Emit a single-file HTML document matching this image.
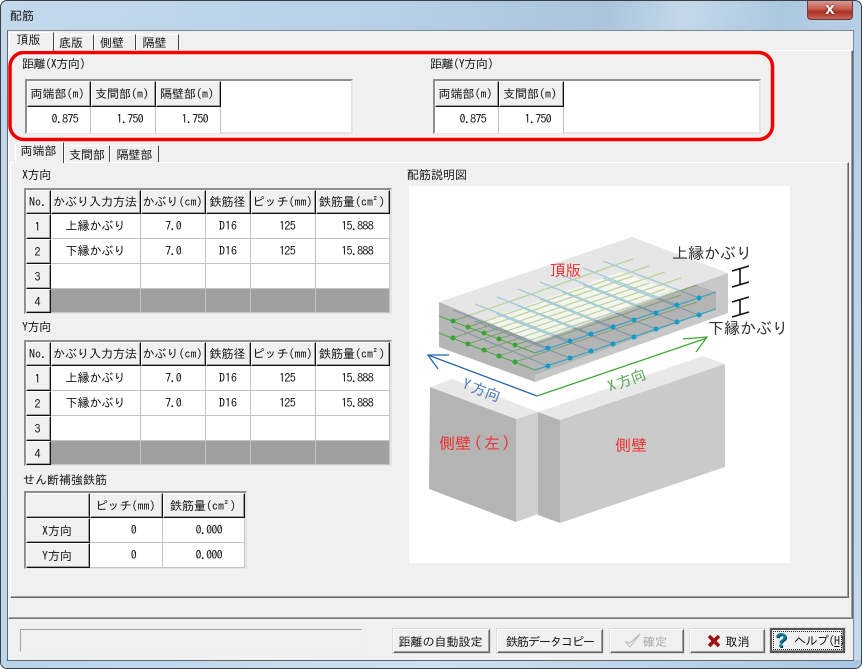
<!DOCTYPE html>
<html lang="ja"><head><meta charset="utf-8"><title>配筋</title>
<style>
html,body{margin:0;padding:0;background:#fff}
#w{position:relative;width:862px;height:669px;overflow:hidden;font:12px/14px "IPAGothic","Noto Sans CJK JP",sans-serif;color:#111;background:#fff}
#w div{position:absolute;box-sizing:border-box;white-space:nowrap}
.h{background:#f0f0f0;border:1px solid;border-color:#fff #111 #111 #fff;box-shadow:inset -1px -1px 0 #a0a0a0;text-align:center;padding-top:5px;padding-right:2px}
.c{background:#fff;border-right:1px solid #c4c4c4;border-bottom:1px solid #c4c4c4;text-align:right;padding-top:5px;letter-spacing:-.7px}
.m{text-align:center;letter-spacing:0}
.d{background:#a0a0a0;border-right:1px solid #c4c4c4;border-bottom:1px solid #c4c4c4}
.g{background:#fff;border:2px solid;border-color:#8f8f8f #e4e4e4 #e4e4e4 #8f8f8f}
.t{background:#f0f0f0;border:1px solid;border-color:#fff #444 transparent #fff;border-bottom:0;text-align:center;padding-top:3px}
.b{background:#f0f0f0;border:1px solid;border-color:#fff #666 #666 #fff;box-shadow:inset -1px -1px 0 #a0a0a0,0 0 0 1px #ddd;text-align:center;padding-top:5px}
.l{letter-spacing:-.4px}
</style></head><body>
<div id="w">
<div style="left:0;top:0;width:862px;height:669px;border:1px solid #3a3f45;border-radius:7px;background:linear-gradient(100deg,#c4d9ec 0%,#b5d0e8 40%,#a9c4dc 62%,#c3d8ea 70%,#acc8e0 80%,#c5daee 100%)"></div>
<div style="left:1px;top:660px;width:860px;height:8px;background:linear-gradient(90deg,#b8d4ea,#cfe1f0 50%,#a9c8e2);border-radius:0 0 6px 6px"></div>
<div style="left:10px;top:9px;font-size:12px;color:#111">配筋</div>
<div style="left:807px;top:1px;width:46px;height:19px;border:1px solid #6d3a3a;border-top:0;border-radius:0 0 4px 4px;background:linear-gradient(#d89a90,#c45a4d 45%,#a92e22 60%,#c9675a);color:#fff;text-align:center;font:bold 17px/15px 'Liberation Sans',sans-serif;text-shadow:0 0 2px #511">x</div>

<div style="left:7px;top:30px;width:847px;height:631px;background:#f0f0f0;border:1px solid;border-color:#7d8a96 #7d8a96 #5f6972 #5f6972"></div>
<!-- outer page -->
<div style="left:8px;top:50px;width:845px;height:569px;border:1px solid;border-color:#fff #666 #666 #fff;box-shadow:inset -1px -1px 0 #a0a0a0"></div>
<div class="t" style="left:9px;top:32px;width:45px;height:19px;z-index:2;padding-top:0;padding-right:6px">頂版</div>
<div class="t" style="left:54px;top:34px;width:40px;height:16px;padding-top:1px;padding-right:6px">底版</div>
<div class="t" style="left:94px;top:34px;width:42px;height:16px;padding-top:1px;padding-right:6px">側壁</div>
<div class="t" style="left:136px;top:34px;width:43px;height:16px;padding-top:1px;padding-right:6px">隔壁</div>

<div class="l" style="left:22px;top:57px">距離(X方向)</div>
<div class="l" style="left:430px;top:57px">距離(Y方向)</div>

<div class="g" style="left:25px;top:79px;width:328px;height:55px"></div>
<div class="h" style="left:27px;top:81px;width:64px;height:26px;padding-right:3px">両端部(m)</div>
<div class="h" style="left:91px;top:81px;width:65px;height:26px;padding-right:3px">支間部(m)</div>
<div class="h" style="left:156px;top:81px;width:65px;height:26px;padding-right:3px">隔壁部(m)</div>
<div class="c" style="left:27px;top:107px;width:64px;height:26px;padding-right:12px;border-bottom:0">0.875</div>
<div class="c" style="left:91px;top:107px;width:65px;height:26px;padding-right:12px;border-bottom:0">1.750</div>
<div class="c" style="left:156px;top:107px;width:65px;height:26px;padding-right:12px;border-bottom:0">1.750</div>

<div class="g" style="left:433px;top:79px;width:328px;height:55px"></div>
<div class="h" style="left:435px;top:81px;width:64px;height:26px;padding-right:3px">両端部(m)</div>
<div class="h" style="left:499px;top:81px;width:65px;height:26px;padding-right:3px">支間部(m)</div>
<div class="c" style="left:435px;top:107px;width:64px;height:26px;padding-right:12px;border-bottom:0">0.875</div>
<div class="c" style="left:499px;top:107px;width:65px;height:26px;padding-right:12px;border-bottom:0">1.750</div>

<!-- inner page -->
<div style="left:10px;top:162px;width:839px;height:436px;border:1px solid;border-color:#fff #666 #666 #fff;box-shadow:inset -1px -1px 0 #a0a0a0"></div>
<div class="t" style="left:15px;top:142px;width:49px;height:21px;z-index:2;padding-top:1px;padding-right:2px">両端部</div>
<div class="t" style="left:64px;top:145px;width:46px;height:17px;padding-top:2px">支間部</div>
<div class="t" style="left:110px;top:145px;width:49px;height:17px;padding-top:2px">隔壁部</div>

<div class="l" style="left:22px;top:168px">X方向</div>
<div class="g" style="left:24px;top:188px;width:368px;height:126px"></div>
<div class="h" style="left:26px;top:190px;width:25px;height:24px;padding-top:4px;padding-right:1px">No.</div>
<div class="h" style="left:51px;top:190px;width:90px;height:24px;padding-top:4px">かぶり入力方法</div>
<div class="h" style="left:141px;top:190px;width:65px;height:24px;padding-top:4px">かぶり(cm)</div>
<div class="h" style="left:206px;top:190px;width:45px;height:24px;padding-top:4px">鉄筋径</div>
<div class="h" style="left:251px;top:190px;width:65px;height:24px;padding-top:4px">ピッチ(mm)</div>
<div class="h" style="left:316px;top:190px;width:74px;height:24px;padding-top:4px">鉄筋量(cm²)</div>
<div class="h" style="left:26px;top:214px;width:25px;height:25px">1</div>
<div class="c m" style="left:51px;top:214px;width:90px;height:25px">上縁かぶり</div>
<div class="c" style="left:141px;top:214px;width:65px;height:25px;padding-right:24px">7.0</div>
<div class="c m" style="left:206px;top:214px;width:45px;height:25px">D16</div>
<div class="c" style="left:251px;top:214px;width:65px;height:25px;padding-right:20px">125</div>
<div class="c" style="left:316px;top:214px;width:74px;height:25px;padding-right:16px">15.888</div>
<div class="h" style="left:26px;top:239px;width:25px;height:25px">2</div>
<div class="c m" style="left:51px;top:239px;width:90px;height:25px">下縁かぶり</div>
<div class="c" style="left:141px;top:239px;width:65px;height:25px;padding-right:24px">7.0</div>
<div class="c m" style="left:206px;top:239px;width:45px;height:25px">D16</div>
<div class="c" style="left:251px;top:239px;width:65px;height:25px;padding-right:20px">125</div>
<div class="c" style="left:316px;top:239px;width:74px;height:25px;padding-right:16px">15.888</div>
<div class="h" style="left:26px;top:264px;width:25px;height:25px">3</div>
<div class="c" style="left:51px;top:264px;width:90px;height:25px"></div>
<div class="c" style="left:141px;top:264px;width:65px;height:25px"></div>
<div class="c" style="left:206px;top:264px;width:45px;height:25px"></div>
<div class="c" style="left:251px;top:264px;width:65px;height:25px"></div>
<div class="c" style="left:316px;top:264px;width:74px;height:25px"></div>
<div class="h" style="left:26px;top:289px;width:25px;height:24px">4</div>
<div class="d" style="left:51px;top:289px;width:90px;height:24px"></div>
<div class="d" style="left:141px;top:289px;width:65px;height:24px"></div>
<div class="d" style="left:206px;top:289px;width:45px;height:24px"></div>
<div class="d" style="left:251px;top:289px;width:65px;height:24px"></div>
<div class="d" style="left:316px;top:289px;width:74px;height:24px"></div>

<div class="l" style="left:22px;top:320px">Y方向</div>
<div class="g" style="left:24px;top:340px;width:368px;height:126px"></div>
<div class="h" style="left:26px;top:342px;width:25px;height:24px;padding-top:4px;padding-right:1px">No.</div>
<div class="h" style="left:51px;top:342px;width:90px;height:24px;padding-top:4px">かぶり入力方法</div>
<div class="h" style="left:141px;top:342px;width:65px;height:24px;padding-top:4px">かぶり(cm)</div>
<div class="h" style="left:206px;top:342px;width:45px;height:24px;padding-top:4px">鉄筋径</div>
<div class="h" style="left:251px;top:342px;width:65px;height:24px;padding-top:4px">ピッチ(mm)</div>
<div class="h" style="left:316px;top:342px;width:74px;height:24px;padding-top:4px">鉄筋量(cm²)</div>
<div class="h" style="left:26px;top:366px;width:25px;height:25px">1</div>
<div class="c m" style="left:51px;top:366px;width:90px;height:25px">上縁かぶり</div>
<div class="c" style="left:141px;top:366px;width:65px;height:25px;padding-right:24px">7.0</div>
<div class="c m" style="left:206px;top:366px;width:45px;height:25px">D16</div>
<div class="c" style="left:251px;top:366px;width:65px;height:25px;padding-right:20px">125</div>
<div class="c" style="left:316px;top:366px;width:74px;height:25px;padding-right:16px">15.888</div>
<div class="h" style="left:26px;top:391px;width:25px;height:25px">2</div>
<div class="c m" style="left:51px;top:391px;width:90px;height:25px">下縁かぶり</div>
<div class="c" style="left:141px;top:391px;width:65px;height:25px;padding-right:24px">7.0</div>
<div class="c m" style="left:206px;top:391px;width:45px;height:25px">D16</div>
<div class="c" style="left:251px;top:391px;width:65px;height:25px;padding-right:20px">125</div>
<div class="c" style="left:316px;top:391px;width:74px;height:25px;padding-right:16px">15.888</div>
<div class="h" style="left:26px;top:416px;width:25px;height:25px">3</div>
<div class="c" style="left:51px;top:416px;width:90px;height:25px"></div>
<div class="c" style="left:141px;top:416px;width:65px;height:25px"></div>
<div class="c" style="left:206px;top:416px;width:45px;height:25px"></div>
<div class="c" style="left:251px;top:416px;width:65px;height:25px"></div>
<div class="c" style="left:316px;top:416px;width:74px;height:25px"></div>
<div class="h" style="left:26px;top:441px;width:25px;height:24px">4</div>
<div class="d" style="left:51px;top:441px;width:90px;height:24px"></div>
<div class="d" style="left:141px;top:441px;width:65px;height:24px"></div>
<div class="d" style="left:206px;top:441px;width:45px;height:24px"></div>
<div class="d" style="left:251px;top:441px;width:65px;height:24px"></div>
<div class="d" style="left:316px;top:441px;width:74px;height:24px"></div>

<div style="left:23px;top:473px">せん断補強鉄筋</div>
<div class="g" style="left:24px;top:491px;width:223px;height:78px"></div>
<div class="h" style="left:26px;top:493px;width:64px;height:25px"></div>
<div class="h" style="left:90px;top:493px;width:73px;height:25px">ピッチ(mm)</div>
<div class="h" style="left:163px;top:493px;width:82px;height:25px">鉄筋量(cm²)</div>
<div class="h" style="left:26px;top:518px;width:64px;height:25px">X方向</div>
<div class="c" style="left:90px;top:518px;width:73px;height:25px;padding-right:26px">0</div>
<div class="c" style="left:163px;top:518px;width:82px;height:25px;padding-right:22px">0.000</div>
<div class="h" style="left:26px;top:543px;width:64px;height:25px">Y方向</div>
<div class="c" style="left:90px;top:543px;width:73px;height:25px;padding-right:26px">0</div>
<div class="c" style="left:163px;top:543px;width:82px;height:25px;padding-right:22px">0.000</div>

<div style="left:407px;top:168px">配筋説明図</div>
<svg style="position:absolute;left:409px;top:186px" width="381" height="377" viewBox="409 186 381 377">
<defs>
<clipPath id="top"><polygon points="439,302 632,237 728,273 535,342"/></clipPath>
<clipPath id="side"><polygon points="439,302 535,342 728,273 728,313 535,382 439,347"/></clipPath>
</defs>
<rect x="409" y="186" width="381" height="377" fill="#fff"/>
<!-- walls -->
<polygon points="430,387 516,419 516,522 429,489" fill="#b4b4b4"/>
<polygon points="430,387 452,379 538,412 516,419" fill="#e8e8e8"/>
<polygon points="516,419 538,412 538,514 516,522" fill="#cfcfcf"/>
<polygon points="538,412 560,420 560,523 538,515" fill="#b4b4b4"/>
<polygon points="538,412 703,356 725,364 560,420" fill="#e8e8e8"/>
<polygon points="560,420 725,364 725,467 560,523" fill="#cacaca"/>
<!-- slab -->
<polygon points="439,302 632,237 728,273 535,342" fill="#e6e6e6"/>
<polygon points="480,322 620,272 672,290 535,340" fill="#f4f5ef"/>
<polygon points="439,302 535,342 535,382 439,347" fill="#b6b6b6"/>
<polygon points="535,342 728,273 728,313 535,382" fill="#c8c8c8"/>
<polygon points="535,342 697,285 716,292 716,309 535,375" fill="#b4b4b4"/>
<!-- green layers -->
<g clip-path="url(#top)" stroke="#b9d39a" stroke-width="1.2" fill="none">
<path d="M453,321L633,259M468,327L649,266M484,333L665,272M499,339L681,278M515,345L697,285"/>
<path d="M453,338L633,276M468,344L649,283M484,350L665,289M499,356L681,295M515,362L697,302"/>
</g>
<g clip-path="url(#side)" stroke="#80a070" stroke-width="1" fill="none">
<path d="M453,321L633,259M468,327L649,266M484,333L665,272M499,339L681,278M515,345L697,285"/>
<path d="M453,338L633,276M468,344L649,283M484,350L665,289M499,356L681,295M515,362L697,302"/>
</g>
<!-- blue layers -->
<g clip-path="url(#top)" stroke="#a5cbd6" stroke-width="1.4" fill="none">
<path d="M453,310L548,348M475,304L570,341M497,297L591,334M518,289L613,327M540,282L634,320M562,275L656,313M583,268L677,305M603,261L699,298"/>
<path d="M453,327L548,366M475,321L570,358M497,314L591,351M518,306L613,344M540,299L634,337M562,292L656,329M583,285L677,322M603,278L699,315"/>
</g>
<g clip-path="url(#side)" stroke="#7f97a3" stroke-width="1.1" fill="none">
<path d="M453,310L548,348M475,304L570,341M497,297L591,334M518,289L613,327M540,282L634,320M562,275L656,313M583,268L677,305M603,261L699,298"/>
<path d="M453,327L548,366M475,321L570,358M497,314L591,351M518,306L613,344M540,299L634,337M562,292L656,329M583,285L677,322M603,278L699,315"/>
</g>
<!-- green rebars on left -->
<g stroke="#4fa548" stroke-width="1" fill="none"><path d="M439,316L535,353M439,333L535,370"/></g>
<!-- blue rebars on right -->
<g stroke="#31a0c4" stroke-width="1" fill="none"><path d="M535,353L716,292M535,370L716,309"/></g>
<g fill="#36a62e">
<circle cx="453" cy="321" r="2.5"/><circle cx="468" cy="327" r="2.5"/><circle cx="484" cy="333" r="2.5"/><circle cx="499" cy="339" r="2.5"/><circle cx="515" cy="345" r="2.5"/>
<circle cx="453" cy="338" r="2.5"/><circle cx="468" cy="344" r="2.5"/><circle cx="484" cy="350" r="2.5"/><circle cx="499" cy="356" r="2.5"/><circle cx="515" cy="362" r="2.5"/>
</g>
<g fill="#0f9ccb">
<circle cx="548" cy="348" r="2.5"/><circle cx="570" cy="341" r="2.5"/><circle cx="591" cy="334" r="2.5"/><circle cx="613" cy="327" r="2.5"/><circle cx="634" cy="320" r="2.5"/><circle cx="656" cy="313" r="2.5"/><circle cx="677" cy="305" r="2.5"/><circle cx="699" cy="298" r="2.5"/>
<circle cx="548" cy="366" r="2.5"/><circle cx="570" cy="358" r="2.5"/><circle cx="591" cy="351" r="2.5"/><circle cx="613" cy="344" r="2.5"/><circle cx="634" cy="337" r="2.5"/><circle cx="656" cy="329" r="2.5"/><circle cx="677" cy="322" r="2.5"/><circle cx="699" cy="315" r="2.5"/>
</g>
<!-- arrows -->
<path d="M537,396L428,355M449,355L428,355L438,369" stroke="#2465ae" stroke-width="1.3" fill="none"/>
<path d="M537,396L707,338M683,339L707,337L696,352" stroke="#42a636" stroke-width="1.3" fill="none"/>
<!-- cover marks -->
<path d="M732,271L749,266M740,268V285M732,287L749,282M732,302L749,297M740,299V314M732,317L749,312" stroke="#111" stroke-width="1.6" fill="none"/>
<g font-family="'IPAGothic','Noto Sans CJK JP',sans-serif">
<text x="672" y="259" font-size="16" fill="#333">上縁かぶり</text>
<text x="708" y="334" font-size="16" fill="#333">下縁かぶり</text>
<text x="550" y="276" font-size="15.500" fill="#f03030">頂版</text>
<text x="439" y="449" font-size="16" fill="#f03030">側壁<tspan dx="3">(</tspan><tspan dx="2">左</tspan><tspan dx="2">)</tspan></text>
<text x="615" y="451" font-size="16" fill="#f03030">側壁</text>
<text transform="translate(461,388) rotate(21)" font-size="15" fill="#4a78b5">Y<tspan dx="2">方向</tspan></text>
<text transform="translate(610,392) rotate(-20)" font-size="15" fill="#52a850">X<tspan dx="2">方向</tspan></text>
</g>
</svg>

<!-- bottom -->
<div style="left:20px;top:629px;width:342px;height:23px;border:1px solid;border-color:#a0a0a0 #eee #eee #a0a0a0"></div>
<div class="b" style="left:393px;top:629px;width:97px;height:24px;padding-right:2px">距離の自動設定</div>
<div class="b" style="left:497px;top:629px;width:106px;height:24px;letter-spacing:-1px">鉄筋データコピー</div>
<div class="b" style="left:610px;top:629px;width:74px;height:24px;color:#a8a8a8;padding-left:16px">確定</div>
<svg style="position:absolute;left:624px;top:632px" width="18" height="18"><path d="M2,10L6,15L16,2L6,11Z" fill="#f4f4f4" stroke="#b5b5b5"/></svg>
<div class="b" style="left:690px;top:629px;width:75px;height:24px;padding-left:20px">取消</div>
<svg style="position:absolute;left:707px;top:634px" width="14" height="14"><path d="M2,2L12,12M12,2L2,12" stroke="#9c1010" stroke-width="3.6"/></svg>
<div class="b" style="left:770px;top:628px;width:75px;height:25px;border:2px solid #555;padding:4px 0 0 22px;overflow:hidden;letter-spacing:-.5px">ヘルプ(<u>H</u>)</div>
<div style="left:773px;top:631px;width:69px;height:19px;border:1px dotted #222"></div>
<div style="left:775px;top:630px;font:bold 20px/22px 'Liberation Sans',sans-serif;color:#0b7f97;text-shadow:1px 1px 0 #06405a">?</div>
<div style="left:9px;top:618px;width:844px;height:1px;background:#777"></div>

<!-- red frame -->
<svg style="position:absolute;left:0;top:0;pointer-events:none" width="862" height="669">
<rect x="10" y="52.500" width="762.500" height="87" rx="14" ry="14" fill="none" stroke="#f00000" stroke-width="3.500"/>
</svg>
</div>
</body></html>
